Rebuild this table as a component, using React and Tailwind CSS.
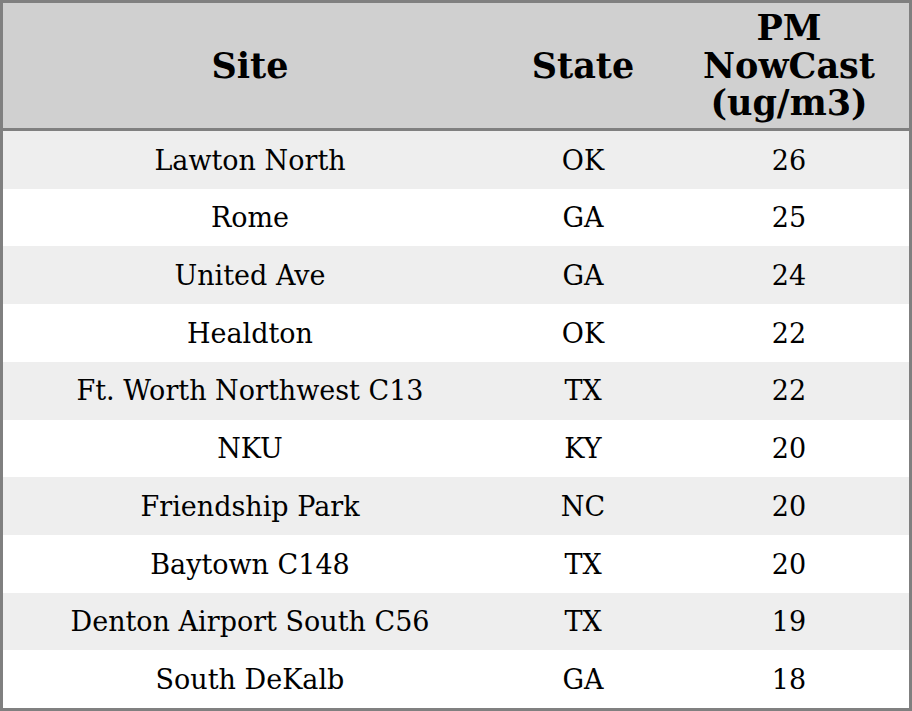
const rows = [
  ['Lawton North', 'OK', 26],
  ['Rome', 'GA', 25],
  ['United Ave', 'GA', 24],
  ['Healdton', 'OK', 22],
  ['Ft. Worth Northwest C13', 'TX', 22],
  ['NKU', 'KY', 20],
  ['Friendship Park', 'NC', 20],
  ['Baytown C148', 'TX', 20],
  ['Denton Airport South C56', 'TX', 19],
  ['South DeKalb', 'GA', 18],
];

export default function App() {
  return (
    <div className="w-[912px] h-[711px] flex flex-col border-[3px] border-[#808080] bg-white text-black font-['DejaVu_Serif',serif]">
      {/* header */}
      <div className="h-[128px] shrink-0 grid grid-cols-[494px_172px_1fr] items-center bg-[#d0d0d0] border-b-[3px] border-[#808080] text-[35px] font-bold leading-[1.07] text-center">
        <div>Site</div>
        <div>State</div>
        <div>
          PM
          <br />
          NowCast
          <br />
          (ug/m3)
        </div>
      </div>

      {rows.map((r, i) => (
        <div
          key={i}
          className={`flex-1 grid grid-cols-[494px_172px_1fr] items-center pt-[2px] text-center text-[27px] ${
            i % 2 === 0 ? 'bg-[#eeeeee]' : 'bg-white'
          }`}
        >
          <div>{r[0]}</div>
          <div>{r[1]}</div>
          <div>{r[2]}</div>
        </div>
      ))}
    </div>
  );
}
